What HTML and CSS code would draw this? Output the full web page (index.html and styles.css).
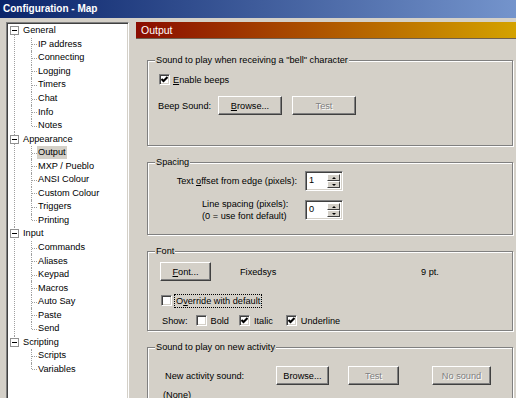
FILE: index.html
```html
<!DOCTYPE html>
<html lang="en">
<head>
  <meta charset="UTF-8">
  <meta name="viewport" content="width=device-width, initial-scale=1.0">
  <title>Configuration - Map</title>
  <link rel="stylesheet" href="styles.css">
</head>
<body>
  <div class="titlebar">Configuration - Map</div>

  <div class="window">
    <!-- Category tree -->
    <div class="tree-box">
      <ul class="tree">
        <li class="node">
          <div class="node-head"><span class="expander"></span><span class="label">General</span></div>
          <ul class="leaves">
            <li class="leaf"><span class="label">IP address</span></li>
            <li class="leaf"><span class="label">Connecting</span></li>
            <li class="leaf"><span class="label">Logging</span></li>
            <li class="leaf"><span class="label">Timers</span></li>
            <li class="leaf"><span class="label">Chat</span></li>
            <li class="leaf"><span class="label">Info</span></li>
            <li class="leaf"><span class="label">Notes</span></li>
          </ul>
        </li>
        <li class="node">
          <div class="node-head"><span class="expander"></span><span class="label">Appearance</span></div>
          <ul class="leaves">
            <li class="leaf"><span class="label selected">Output</span></li>
            <li class="leaf"><span class="label">MXP / Pueblo</span></li>
            <li class="leaf"><span class="label">ANSI Colour</span></li>
            <li class="leaf"><span class="label">Custom Colour</span></li>
            <li class="leaf"><span class="label">Triggers</span></li>
            <li class="leaf"><span class="label">Printing</span></li>
          </ul>
        </li>
        <li class="node">
          <div class="node-head"><span class="expander"></span><span class="label">Input</span></div>
          <ul class="leaves">
            <li class="leaf"><span class="label">Commands</span></li>
            <li class="leaf"><span class="label">Aliases</span></li>
            <li class="leaf"><span class="label">Keypad</span></li>
            <li class="leaf"><span class="label">Macros</span></li>
            <li class="leaf"><span class="label">Auto Say</span></li>
            <li class="leaf"><span class="label">Paste</span></li>
            <li class="leaf"><span class="label">Send</span></li>
          </ul>
        </li>
        <li class="node">
          <div class="node-head"><span class="expander"></span><span class="label">Scripting</span></div>
          <ul class="leaves">
            <li class="leaf"><span class="label">Scripts</span></li>
            <li class="leaf"><span class="label">Variables</span></li>
          </ul>
        </li>
      </ul>
    </div>

    <!-- Output page -->
    <div class="pane">
      <div class="pane-header">Output</div>
      <div class="pane-body">

        <fieldset class="group group-bell">
          <legend>Sound to play when receiving a "bell" character</legend>
          <div class="row row-enable">
            <span class="check"><svg width="7" height="7" viewBox="0 0 7 7"><path d="M0.5 3 L2.5 5 L6.5 1" fill="none" stroke="#000" stroke-width="2"/></svg></span>
            <span class="check-text"><u>E</u>nable beeps</span>
          </div>
          <div class="row row-beep">
            <span class="beep-label">Beep Sound:</span>
            <button class="btn btn-beep"><u>B</u>rowse...</button>
            <button class="btn btn-beep btn-gap" disabled>Test</button>
          </div>
        </fieldset>

        <fieldset class="group group-spacing">
          <legend>Spacing</legend>
          <div class="row row-offset">
            <span class="spin-label offset-label">Text <u>o</u>ffset from edge (pixels):</span>
            <span class="spin">
              <span class="spin-value">1</span>
              <span class="spin-arrows"><span class="spin-btn up"></span><span class="spin-btn down"></span></span>
            </span>
          </div>
          <div class="row row-linespace">
            <span class="spin-label linespace-label">Line spacing (pixels):<br>(0 = use font default)</span>
            <span class="spin">
              <span class="spin-value">0</span>
              <span class="spin-arrows"><span class="spin-btn up"></span><span class="spin-btn down"></span></span>
            </span>
          </div>
        </fieldset>

        <fieldset class="group group-font">
          <legend>Font</legend>
          <div class="row row-font">
            <button class="btn btn-font"><u>F</u>ont...</button>
            <span class="font-name">Fixedsys</span>
            <span class="font-size">9 pt.</span>
          </div>
          <div class="row row-override">
            <span class="check"></span>
            <span class="focus">O<u>v</u>erride with default</span>
          </div>
          <div class="row row-show">
            <span class="show-label">Show:</span>
            <span class="check opt-bold"></span>
            <span class="opt-text">Bold</span>
            <span class="check opt-italic"><svg width="7" height="7" viewBox="0 0 7 7"><path d="M0.5 3 L2.5 5 L6.5 1" fill="none" stroke="#000" stroke-width="2"/></svg></span>
            <span class="opt-text">Italic</span>
            <span class="check opt-underline"><svg width="7" height="7" viewBox="0 0 7 7"><path d="M0.5 3 L2.5 5 L6.5 1" fill="none" stroke="#000" stroke-width="2"/></svg></span>
            <span class="opt-text">Underline</span>
          </div>
        </fieldset>

        <fieldset class="group group-activity">
          <legend>Sound to play on new activity</legend>
          <div class="row row-activity">
            <span class="activity-label">New activity sound:</span>
            <button class="btn btn-browse">Browse...</button>
            <button class="btn btn-test" disabled>Test</button>
            <button class="btn btn-none" disabled>No sound</button>
          </div>
          <div class="row row-current">(None)</div>
        </fieldset>

      </div>
    </div>
  </div>
</body>
</html>
```

FILE: styles.css
```css
body {
  margin: 0;
  height: 398px;
  overflow: hidden;
  background-color: #d4d0c8;
  font-family: "Liberation Sans", Arial, sans-serif;
  font-size: 9.2px;
  color: #000;
}

/* Title bar */
.titlebar {
  height: 18px;
  line-height: 17px;
  padding-left: 3px;
  background: linear-gradient(to right, #0a246a, #7494cc);
  color: #fff;
  font-size: 10px;
  font-weight: bold;
}

.window {
  display: flex;
  gap: 7px;
  height: 400px;
  padding: 4px 0 0 6px;
}

/* Tree */
.tree-box {
  width: 120px;
  flex: none;
  padding: 1px 0 0 1px;
  border: 1px solid;
  border-color: #808080 #fff #fff #808080;
  box-shadow: inset 1px 1px #404040, inset -1px -1px #d4d0c8;
  background-color: #fff;
}
.tree,
.leaves {
  margin: 0;
  padding: 0;
  list-style: none;
}
.node,
.leaf {
  position: relative;
}
.node-head,
.leaf {
  display: flex;
  align-items: center;
  height: 13.56px;
}
.node::before {
  content: "";
  position: absolute;
  left: 6px;
  top: 0;
  bottom: 0;
  border-left: 1px dotted #a0a0a0;
}
.node:first-child::before {
  top: 7px;
}
.node:last-child::before {
  bottom: auto;
  height: 7px;
}
.expander {
  position: relative;
  z-index: 1;
  width: 7px;
  height: 7px;
  margin-left: 2px;
  border: 1px solid #909090;
  background: linear-gradient(#000, #000) center / 5px 1px no-repeat, #fff;
}
.node-head .label {
  margin-left: 3px;
}
.label {
  padding: 0 1px;
  line-height: 13px;
}
.label.selected {
  background-color: #d4d0c8;
}
.leaf {
  padding-left: 29px;
}
.leaf::before {
  content: "";
  position: absolute;
  left: 23px;
  top: 0;
  bottom: 0;
  border-left: 1px dotted #a0a0a0;
}
.leaf:last-child::before {
  bottom: 50%;
}
.leaf::after {
  content: "";
  position: absolute;
  left: 24px;
  top: 50%;
  width: 5px;
  border-top: 1px dotted #a0a0a0;
}

/* Right pane */
.pane {
  flex: 1;
  min-width: 0;
}
.pane-header {
  height: 16px;
  line-height: 16px;
  padding-left: 5px;
  border-bottom: 1px solid #6e6050;
  background: linear-gradient(to right, #8a0c00, #d4a200);
  color: #fff;
  font-size: 10.5px;
}
.pane-body {
  padding: 15px 3px 0 11px;
}

.group {
  margin: 0 0 10px;
  padding: 0 10px;
  min-width: 0;
  border: 1px solid #808080;
  box-shadow: inset 1px 1px #fff, 1px 1px #fff;
}
.group legend {
  margin-left: -3px;
  padding: 0 1px;
  line-height: 12px;
  background-color: #d4d0c8;
}
.row {
  display: flex;
  align-items: center;
}

/* Controls */
.btn {
  height: 19px;
  padding: 0;
  font: inherit;
  color: #000;
  background-color: #d4d0c8;
  border: 1px solid;
  border-color: #fff #404040 #404040 #fff;
  box-shadow: inset -1px -1px #808080;
}
.btn:disabled {
  color: #808080;
  text-shadow: 1px 1px #fff;
}
.check {
  display: inline-flex;
  align-items: center;
  justify-content: center;
  flex: none;
  width: 11px;
  height: 11px;
  box-sizing: border-box;
  border: 1px solid;
  border-color: #808080 #fff #fff #808080;
  box-shadow: inset 1px 1px #404040, inset -1px -1px #d4d0c8;
  background-color: #fff;
}
.spin {
  display: flex;
  flex: none;
  width: 38px;
  height: 20px;
  box-sizing: border-box;
  margin-left: 8px;
  padding: 2px;
  border: 1px solid;
  border-color: #808080 #fff #fff #808080;
  box-shadow: inset 1px 1px #404040, inset -1px -1px #d4d0c8;
  background-color: #fff;
}
.spin-value {
  flex: 1;
  padding-left: 1px;
  line-height: 13px;
}
.spin-arrows {
  display: flex;
  flex-direction: column;
  width: 13px;
}
.spin-btn {
  display: flex;
  flex: 1;
  align-items: center;
  justify-content: center;
  background-color: #d4d0c8;
  border: 1px solid;
  border-color: #fff #404040 #404040 #fff;
}
.spin-btn.up::after,
.spin-btn.down::after {
  content: "";
  border-left: 2px solid transparent;
  border-right: 2px solid transparent;
}
.spin-btn.up::after {
  border-bottom: 2px solid #000;
}
.spin-btn.down::after {
  border-top: 2px solid #000;
}

/* Bell group */
.group-bell {
  padding-top: 7px;
  padding-bottom: 30px;
}
.row-enable {
  height: 13px;
  margin-bottom: 10px;
}
.row-enable .check {
  margin-left: 1px;
}
.check-text {
  margin-left: 3px;
}
.beep-label {
  width: 60px;
}
.btn-beep {
  width: 64px;
}
.btn-gap {
  margin-left: 10px;
}

/* Spacing group */
.group-spacing {
  padding-top: 3px;
  padding-bottom: 12px;
}
.row-offset {
  height: 20px;
  margin-bottom: 7px;
}
.row-linespace {
  height: 24px;
}
.spin-label {
  line-height: 12px;
  white-space: nowrap;
}
.offset-label {
  width: 130px;
  margin-left: 9px;
  text-align: right;
}
.linespace-label {
  width: 95px;
  margin-left: 44px;
}

/* Font group */
.group-font {
  padding-top: 5px;
  padding-bottom: 3px;
}
.btn-font {
  width: 51px;
  margin-left: 2px;
}
.font-name {
  width: 181px;
  margin-left: 29px;
}
.row-override {
  height: 13px;
  margin-top: 13px;
}
.row-override .check {
  margin-left: 3px;
}
.focus {
  margin-left: 3px;
  padding: 0 1px;
  line-height: 12px;
  outline: 1px dotted #000;
}
.row-show {
  height: 13px;
  margin-top: 7px;
}
.show-label {
  margin-left: 4px;
}
.opt-text {
  margin-left: 4px;
}
.opt-bold {
  margin-left: 8px;
}
.opt-italic {
  margin-left: 10px;
}
.opt-underline {
  margin-left: 13px;
}

/* Activity group */
.group-activity {
  padding-top: 13px;
  padding-bottom: 20px;
}
.activity-label {
  width: 111px;
  margin-left: 7px;
}
.btn-browse {
  width: 53px;
}
.btn-test {
  width: 51px;
  margin-left: 19px;
}
.btn-none {
  width: 59px;
  margin-left: 33px;
}
.row-current {
  margin: 5px 0 0 5px;
}
```
